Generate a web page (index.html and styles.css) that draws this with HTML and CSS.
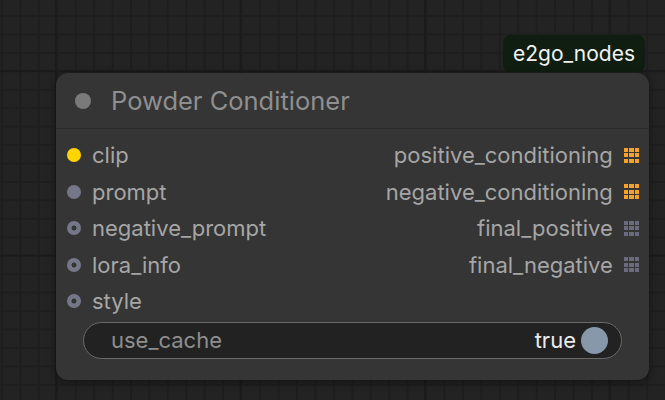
FILE: index.html
```html
<!DOCTYPE html>
<html>
<head>
<meta charset="utf-8">
<link rel="stylesheet" href="styles.css">
</head>
<body>
<div class="canvas">
  <div class="node-wrap">
    <div class="badge">e2go_nodes</div>
    <div class="node">
      <div class="title">
        <span class="title-dot"></span>
        <span class="title-text">Powder Conditioner</span>
      </div>
      <div class="body">
        <div class="slots">
          <div class="in"><span class="dot dot-yellow"></span>clip</div>
          <div class="out">positive_conditioning<span class="grid-ico orange"><i></i><i></i><i></i><i></i><i></i><i></i><i></i><i></i><i></i></span></div>
          <div class="in"><span class="dot dot-grey"></span>prompt</div>
          <div class="out">negative_conditioning<span class="grid-ico orange"><i></i><i></i><i></i><i></i><i></i><i></i><i></i><i></i><i></i></span></div>
          <div class="in"><span class="dot dot-ring"></span>negative_prompt</div>
          <div class="out">final_positive<span class="grid-ico grey"><i></i><i></i><i></i><i></i><i></i><i></i><i></i><i></i><i></i></span></div>
          <div class="in"><span class="dot dot-ring"></span>lora_info</div>
          <div class="out">final_negative<span class="grid-ico grey"><i></i><i></i><i></i><i></i><i></i><i></i><i></i><i></i><i></i></span></div>
          <div class="in"><span class="dot dot-ring"></span>style</div>
          <div class="out"></div>
        </div>
        <div class="widget">
          <span class="w-label">use_cache</span>
          <span class="w-value">true</span>
          <span class="toggle"></span>
        </div>
      </div>
    </div>
  </div>
</div>
</body>
</html>
```

FILE: styles.css
```css
html, body {
  margin: 0;
  padding: 0;
}
body {
  width: 665px;
  height: 400px;
  overflow: hidden;
  font-family: Inter, "Noto Sans", sans-serif;
  background-color: #232323;
  background-image:
    linear-gradient(90deg, #1b1b1b 0 2px, transparent 2px),
    linear-gradient(0deg, #1b1b1b 0 2px, transparent 2px),
    linear-gradient(90deg, #1e1e1e 0 1.5px, transparent 1.5px),
    linear-gradient(0deg, #1e1e1e 0 1.5px, transparent 1.5px);
  background-size: 184.5px 184.5px, 184.5px 184.5px, 18.45px 18.45px, 18.45px 18.45px;
  background-position: 55px 0, 0 72px, 1px 0, 0 17px;
}
.canvas {
  position: relative;
  width: 665px;
  height: 400px;
}
.node-wrap {
  position: absolute;
  left: 56px;
  top: 35px;
  width: 593px;
  display: flex;
  flex-direction: column;
  align-items: flex-end;
  gap: 1px;
}
.badge {
  margin-right: 4px;
  height: 37px;
  padding: 0 10px;
  display: flex;
  align-items: center;
  background: #0f1e10;
  color: #f2f2f2;
  font-size: 21px;
  border-radius: 8px;
}
.node {
  align-self: stretch;
  background: #353535;
  border-radius: 12px;
  box-shadow: 0 2px 8px rgba(0,0,0,0.45);
  height: 307px;
  display: flex;
  flex-direction: column;
}
.title {
  height: 55px;
  display: flex;
  align-items: center;
  padding-left: 19px;
  border-bottom: 1.5px solid #2b2b2b;
  gap: 20px;
}
.title-dot {
  width: 16px;
  height: 16px;
  border-radius: 50%;
  background: #7a7a7a;
}
.title-text {
  color: #8f8f8f;
  font-size: 25.5px;
}
.body {
  padding: 8px 0 0 0;
  display: flex;
  flex-direction: column;
}
.slots {
  display: grid;
  grid-template-columns: 1fr 1fr;
  grid-auto-rows: 36.5px;
}
.in, .out {
  display: flex;
  align-items: center;
  color: #a6a6a6;
  font-size: 22px;
}
.in {
  padding-left: 11px;
  gap: 11px;
}
.out {
  justify-content: flex-end;
  padding-right: 10px;
  gap: 11px;
}
.dot {
  width: 14px;
  height: 14px;
  border-radius: 50%;
  box-sizing: border-box;
  flex: none;
}
.dot-yellow { background: #ffd500; }
.dot-grey { background: #767689; }
.dot-ring {
  background: radial-gradient(circle, #353535 0 2.2px, #767689 2.8px);
}
.grid-ico {
  display: grid;
  grid-template-columns: repeat(3, 4.2px);
  grid-auto-rows: 4.2px;
  gap: 1.3px;
  flex: none;
}
.grid-ico i { display: block; }
.orange i { background: #f7a227; }
.grey i { background: #6b6b7f; }
.widget {
  margin: 2px 27px 0 27px;
  height: 37px;
  box-sizing: border-box;
  border: 1.5px solid #6a6a6a;
  border-radius: 19px;
  background: #222222;
  display: flex;
  align-items: center;
  padding: 0 13px 0 27px;
}
.w-label {
  color: #8e8e8e;
  font-size: 22px;
  flex: 1;
}
.w-value {
  color: #ececec;
  font-size: 22px;
  margin-right: 5px;
}
.toggle {
  width: 27px;
  height: 27px;
  border-radius: 50%;
  background: #8898ab;
}
```
